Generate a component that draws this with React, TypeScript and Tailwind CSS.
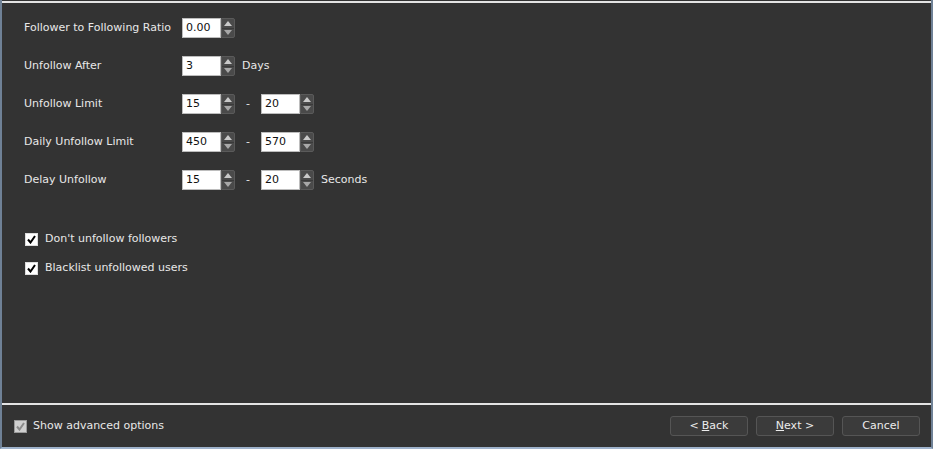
import type { ReactNode } from 'react'

const FONT = '"DejaVu Sans", Tahoma, Verdana, sans-serif'

// Small up/down arrow pair used next to numeric fields
function Spinner() {
  return (
    <div className="flex h-[20px] w-[14px] flex-col rounded-r-[2px] border border-[#5a5a5a] bg-[#4a4a4a]">
      <div className="flex flex-1 items-center justify-center border-b border-[#3a3a3a]">
        <svg width="8" height="5" viewBox="0 0 8 5">
          <path d="M0 5 L4 0 L8 5 Z" fill="#c9c9c9" />
        </svg>
      </div>
      <div className="flex flex-1 items-center justify-center">
        <svg width="8" height="5" viewBox="0 0 8 5">
          <path d="M0 0 L4 5 L8 0 Z" fill="#a8a8a8" />
        </svg>
      </div>
    </div>
  )
}

function NumberField({ value }: { value: string }) {
  return (
    <div className="flex items-center">
      <div className="flex h-[20px] w-[39px] items-center border border-[#bdbdbd] bg-white pl-[3px] text-[11px] text-[#111]">
        {value}
      </div>
      <Spinner />
    </div>
  )
}

function Range({ from, to }: { from: string; to: string }) {
  return (
    <>
      <NumberField value={from} />
      <span className="w-[26px] text-center">-</span>
      <NumberField value={to} />
    </>
  )
}

function Row({ label, children }: { label: string; children: ReactNode }) {
  return (
    <div className="flex h-[20px] items-center">
      <span className="w-[158px]">{label}</span>
      {children}
    </div>
  )
}

function CheckBox({ checked, disabled }: { checked: boolean; disabled?: boolean }) {
  return (
    <div
      className={
        disabled
          ? 'flex h-[13px] w-[13px] items-center justify-center border border-[#9a9a9a] bg-[#cfcfcf]'
          : 'flex h-[13px] w-[13px] items-center justify-center border border-[#dcdcdc] bg-white'
      }
    >
      {checked && (
        <svg width="9" height="9" viewBox="0 0 9 9">
          <path
            d="M1 4.5 L3.5 7.5 L8 1"
            fill="none"
            stroke={disabled ? '#8a8a8a' : '#000'}
            strokeWidth="2"
          />
        </svg>
      )}
    </div>
  )
}

function WizardButton({ children }: { children: ReactNode }) {
  return (
    <button className="flex h-[20px] w-[78px] items-center justify-center rounded-[3px] border border-[#555] bg-[#3b3b3b] text-[11px] text-[#ececec]">
      {children}
    </button>
  )
}

export default function App() {
  return (
    <div
      className="flex h-[449px] w-[933px] flex-col border-x-2 border-b-2 border-x-[#6f8196] border-b-[#9fb3cc] bg-[#333333] text-[11px] text-[#e8e8e8]"
      style={{ fontFamily: FONT }}
    >
      <div className="mt-[1px] h-[2px] bg-[#e4e4e4]" />

      {/* Settings */}
      <div className="flex flex-1 flex-col pl-[22px] pt-[15px]">
        <div className="flex flex-col gap-[18px]">
          <Row label="Follower to Following Ratio">
            <NumberField value="0.00" />
          </Row>
          <Row label="Unfollow After">
            <NumberField value="3" />
            <span className="ml-[7px]">Days</span>
          </Row>
          <Row label="Unfollow Limit">
            <Range from="15" to="20" />
          </Row>
          <Row label="Daily Unfollow Limit">
            <Range from="450" to="570" />
          </Row>
          <Row label="Delay Unfollow">
            <Range from="15" to="20" />
            <span className="ml-[7px]">Seconds</span>
          </Row>
        </div>

        <div className="mt-[43px] flex flex-col gap-[16px] pl-[1px]">
          <label className="flex h-[13px] items-center gap-[7px]">
            <CheckBox checked />
            <span>Don't unfollow followers</span>
          </label>
          <label className="flex h-[13px] items-center gap-[7px]">
            <CheckBox checked />
            <span>Blacklist unfollowed users</span>
          </label>
        </div>
      </div>

      <div className="h-[2px] bg-[#e4e4e4]" />

      {/* Footer */}
      <div className="flex h-[42px] items-center justify-between pl-[12px] pr-[11px]">
        <label className="flex items-center gap-[6px]">
          <CheckBox checked disabled />
          <span>Show advanced options</span>
        </label>
        <div className="flex gap-[8px]">
          <WizardButton>
            &lt; <span className="ml-[3px] underline">B</span>ack
          </WizardButton>
          <WizardButton>
            <span className="underline">N</span>ext &gt;
          </WizardButton>
          <WizardButton>Cancel</WizardButton>
        </div>
      </div>
    </div>
  )
}
